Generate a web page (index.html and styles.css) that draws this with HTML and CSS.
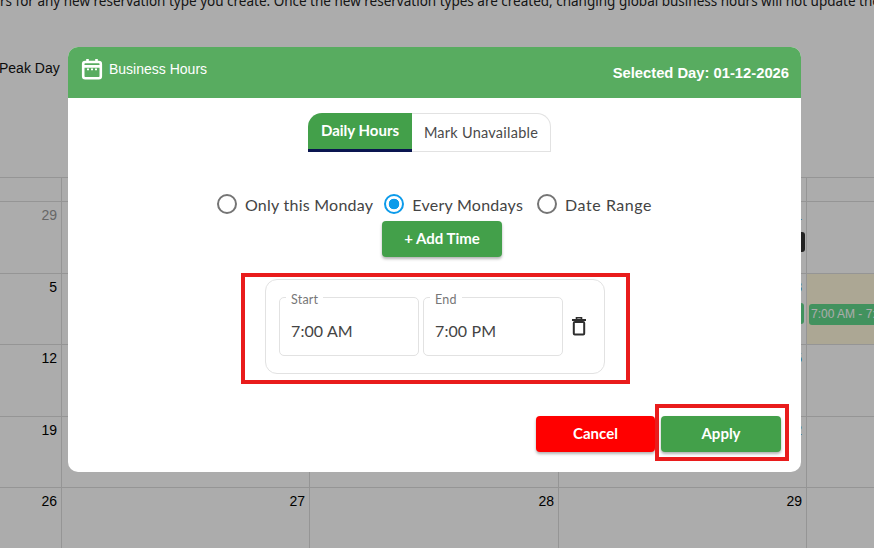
FILE: index.html
```html
<!DOCTYPE html>
<html lang="en">
<head>
<meta charset="utf-8">
<title>Business Hours</title>
<link rel="stylesheet" href="styles.css">
</head>
<body>
<div class="page">
  <p class="notice">rs for any new reservation type you create. Once the new reservation types are created, changing global business hours will not update the</p>
  <div class="peak">Peak Day</div>
  <div class="calendar">
    <div class="head-row">
      <div class="cell first"></div><div class="cell"></div><div class="cell"></div><div class="cell"></div><div class="cell last"></div>
    </div>
    <div class="row">
      <div class="cell first"><span class="num muted">29</span></div><div class="cell"></div><div class="cell"></div><div class="cell"><span class="num link">1</span><span class="tag"></span></div><div class="cell last"></div>
    </div>
    <div class="row">
      <div class="cell first"><span class="num">5</span></div><div class="cell"></div><div class="cell"></div><div class="cell"><span class="num link">8</span><span class="event tail"></span></div><div class="cell last hl"><span class="event">7:00 AM - 7:00 PM</span></div>
    </div>
    <div class="row">
      <div class="cell first"><span class="num">12</span></div><div class="cell"></div><div class="cell"></div><div class="cell"><span class="num link">15</span></div><div class="cell last"></div>
    </div>
    <div class="row">
      <div class="cell first"><span class="num">19</span></div><div class="cell"></div><div class="cell"></div><div class="cell"><span class="num link">22</span></div><div class="cell last"></div>
    </div>
    <div class="row">
      <div class="cell first"><span class="num">26</span></div><div class="cell"><span class="num">27</span></div><div class="cell"><span class="num">28</span></div><div class="cell"><span class="num">29</span></div><div class="cell last"></div>
    </div>
  </div>
</div>
<div class="backdrop"></div>
<section class="modal">
  <header class="modal-head">
    <div class="title">
      <svg class="cal-icon" width="22" height="22" viewBox="0 0 22 22" fill="none" stroke="#fff" stroke-width="2.6"><rect x="2.2" y="4" width="17.6" height="16.2" rx="2"/><path d="M6.5 1v4M15.5 1v4"/><path d="M2.5 8.4h17" stroke-width="2.6"/><path d="M6 11.4h2M10 11.4h2M14 11.4h2" stroke-width="1.6"/></svg>
      <span>Business Hours</span>
    </div>
    <div class="selected">Selected Day: 01-12-2026</div>
  </header>
  <div class="tabs">
    <div class="tab active">Daily Hours</div>
    <div class="tab">Mark Unavailable</div>
  </div>
  <div class="radios">
    <label class="radio"><span class="dot"></span>Only this Monday</label>
    <label class="radio"><span class="dot on"></span>Every Mondays</label>
    <label class="radio range"><span class="dot"></span>Date Range</label>
  </div>
  <div class="add-wrap"><button class="btn add">+ Add Time</button></div>
  <div class="mark-time">
    <div class="time-card">
      <div class="field"><span class="legend">Start</span><span class="value">7:00 AM</span></div>
      <div class="field"><span class="legend">End</span><span class="value">7:00 PM</span></div>
      <svg class="trash" width="16" height="20" viewBox="0 0 16 20" fill="none" stroke="#2e2e2e"><path d="M1 4h14" stroke-width="2"/><path d="M5.5 3V1.8h5V3" stroke-width="1.6"/><rect x="2.8" y="6" width="10.4" height="12.6" rx="1" stroke-width="2"/></svg>
    </div>
  </div>
  <footer class="actions">
    <button class="btn cancel">Cancel</button>
    <div class="mark-apply"><button class="btn apply">Apply</button></div>
  </footer>
</section>
</body>
</html>
```
FILE: styles.css
```css
* { box-sizing: border-box; }
html, body { margin: 0; height: 100%; overflow: hidden; }
body { position: relative; width: 874px; height: 548px; background: #fff; font-family: "Liberation Sans", Arial, sans-serif; color: #000; }

.page { height: 548px; overflow: hidden; }
.notice { margin: -9px 0 0; height: 37px; white-space: nowrap; font-family: "Noto Sans", sans-serif; font-size: 13.5px; line-height: 20px; color: #222; }
.peak { padding: 40px 0 0 0; height: 157px; font-size: 14px; line-height: 16px; margin: -8px 0 0 -1px; color: #111; }
.calendar { display: flex; flex-direction: column; }
.head-row { display: grid; grid-template-columns: 62px 248px 249px 248px 67px; height: 25px; border-top: 1px solid #ddd; border-bottom: 1px solid #ddd; }
.row { display: grid; grid-template-columns: 62px 248px 249px 248px 67px; height: 71.5px; border-bottom: 1px solid #ddd; }
.cell { border-right: 1px solid #ddd; text-align: right; padding: 4px 4px 0 0; min-width: 0; overflow: hidden; }
.cell.last { border-right: 0; }
.num { display: block; font-size: 14px; line-height: 18px; }
.num.muted { color: #999; }
.num.link { color: #1a73c8; }
.hl { background: #fff8dc; padding: 30px 0 0 2px; text-align: left; }
.event { display: block; width: 90px; height: 21px; padding: 0 2px; background: #63d98c; color: #fff; border-radius: 3px; font-size: 12px; line-height: 21px; white-space: nowrap; }
.event.tail { margin: 7px -2px 0 auto; }
.tag { display: block; width: 40px; height: 20px; margin: 8px -3px 0 auto; background: #333; border-radius: 3px; }

.backdrop { position: absolute; inset: 0; background: rgba(0, 0, 0, .325); }

.modal { position: absolute; left: 68px; top: 47px; width: 733px; height: 425px; background: #fff; border-radius: 10px; display: flex; flex-direction: column; overflow: hidden; }
.modal-head { height: 51px; background: #58ac60; color: #fff; display: flex; justify-content: space-between; padding: 0 12px 0 13px; }
.title { display: flex; align-items: flex-start; gap: 6px; padding-top: 11px; font-size: 14px; line-height: 22px; }
.selected { padding-top: 16px; font-size: 14.75px; font-weight: 700; line-height: 20px; }

.tabs { display: flex; justify-content: center; margin-top: 15px; height: 39px; padding-right: 10px; }
.tab { font-family: "Lato", sans-serif; width: 139px; display: flex; align-items: center; justify-content: center; white-space: nowrap; font-size: 14.5px; color: #4a4a4a; letter-spacing: .25px; border: 1px solid #e2e2e2; border-left: 0; border-top-right-radius: 14px; padding-bottom: 1px; }
.tab.active { width: 104px; background: #43a04a; color: #fff; font-size: 15px; font-weight: 700; border: 0; border-bottom: 3px solid #0a1550; border-radius: 14px 0 0 0; letter-spacing: 0; padding-bottom: 3px; }

.radios { display: flex; justify-content: center; gap: 11px; margin-top: 40px; font-family: "Lato", sans-serif; font-size: 16px; color: #444; letter-spacing: .25px; }
.radio { display: flex; align-items: center; gap: 8px; height: 24px; }
.radio.range { margin-left: 3px; letter-spacing: .55px; }
.dot { width: 20px; height: 20px; border-radius: 50%; border: 2px solid #757575; display: block; flex: none; }
.dot.on { border-color: #0d9bea; background: radial-gradient(circle, #0d9bea 0 5px, #fff 5.6px); }

.add-wrap { display: flex; justify-content: center; margin-top: 5px; padding-left: 15px; }
.btn { font-family: "Lato", sans-serif; font-weight: 700; color: #fff; font-size: 15px; border: 0; border-radius: 4px; padding: 0 0 2px; box-shadow: 0 2px 3px rgba(0,0,0,.3); }
.btn.add { width: 120px; height: 36px; background: #43a04a; }

.mark-time { width: 389px; height: 111px; margin: 16px 0 0 173px; border: 4px solid #e91c1c; padding: 2px 21px 0 20px; }
.time-card { height: 95px; border: 1px solid #e2e2e2; border-radius: 12px; display: flex; gap: 4px; padding: 17px 13px 0 13px; }
.field { position: relative; width: 140px; height: 59px; border: 1px solid #e2e2e2; border-radius: 5px; padding: 23px 0 0 11px; }
.legend { position: absolute; left: 6px; top: -5px; background: #fff; padding: 0 5px; font-family: "Lato", sans-serif; font-size: 12.5px; line-height: 14px; color: #777; letter-spacing: .2px; }
.value { font-family: "Lato", sans-serif; font-size: 16px; line-height: 20px; color: #444; letter-spacing: .1px; }
.trash { margin: 19px 0 0 4px; flex: none; }

.actions { display: flex; justify-content: flex-end; align-items: flex-start; padding-right: 12px; margin-top: 20px; }
.btn.cancel { width: 119px; height: 36px; margin-top: 12px; background: #f00; }
.mark-apply { width: 134px; height: 57px; border: 4px solid #e91c1c; padding: 8px 4px 0 2px; }
.btn.apply { width: 120px; height: 36px; background: #43a04a; display: block; }
```
